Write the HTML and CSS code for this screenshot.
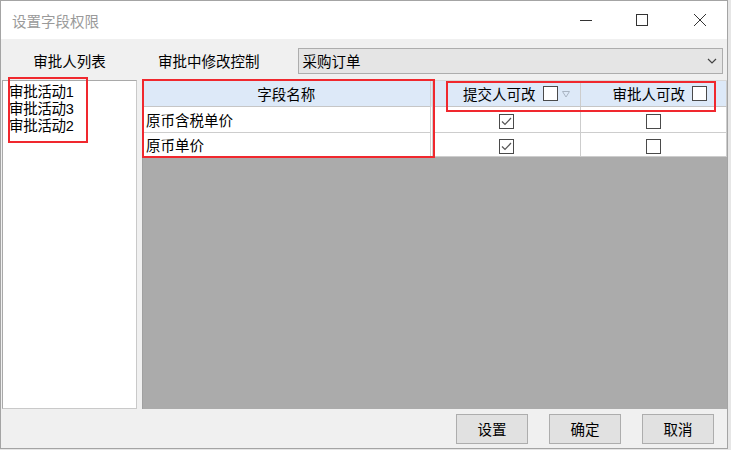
FILE: index.html
```html
<!DOCTYPE html>
<html lang="zh-CN">
<head>
    <meta charset="UTF-8">
    <title>设置字段权限</title>
    <link rel="stylesheet" href="styles.css">
</head>
<body>
    <div class="window">
        <div class="titlebar">
            <span class="title">设置字段权限</span>
            <div class="controls">
                <svg class="ctl ctl-min" width="14" height="14" viewBox="0 0 14 14"><line x1="1" y1="7.5" x2="13" y2="7.5" stroke="#333" stroke-width="1"/></svg>
                <svg class="ctl ctl-max" width="14" height="14" viewBox="0 0 14 14"><rect x="1.5" y="1.5" width="11" height="11" fill="none" stroke="#333" stroke-width="1"/></svg>
                <svg class="ctl ctl-close" width="14" height="14" viewBox="0 0 14 14"><path d="M1 1 L13 13 M13 1 L1 13" stroke="#333" stroke-width="1"/></svg>
            </div>
        </div>

        <div class="client">
            <div class="toolbar">
                <span class="label list-label">审批人列表</span>
                <span class="label ctrl-label">审批中修改控制</span>
                <div class="select">
                    <span>采购订单</span>
                    <svg width="10" height="6" viewBox="0 0 10 6"><polyline points="1,1 5,5 9,1" fill="none" stroke="#444" stroke-width="1.2"/></svg>
                </div>
            </div>

            <div class="main">
                <div class="approver-list">
                    <div class="item">审批活动1</div>
                    <div class="item">审批活动3</div>
                    <div class="item">审批活动2</div>
                </div>
                <div class="grid">
                    <table class="fields">
                        <colgroup>
                            <col class="c-name">
                            <col class="c-submit">
                            <col class="c-approve">
                        </colgroup>
                        <thead>
                            <tr>
                                <th class="name-head">字段名称</th>
                                <th>
                                    <div class="head-cell head-submit">
                                        <span>提交人可改</span>
                                        <span class="box"></span>
                                        <svg class="filter" width="8" height="8" viewBox="0 0 8 8"><polygon points="0.5,1.5 7.5,1.5 4,7" fill="none" stroke="#a9b4c2" stroke-width="1"/></svg>
                                    </div>
                                </th>
                                <th>
                                    <div class="head-cell head-approve">
                                        <span>审批人可改</span>
                                        <span class="box"></span>
                                    </div>
                                </th>
                            </tr>
                        </thead>
                        <tbody>
                            <tr>
                                <td class="name">原币含税单价</td>
                                <td class="check"><span class="box"><svg width="13" height="13" viewBox="0 0 13 13"><polyline points="2,6.5 5,9.5 11,3" fill="none" stroke="#555" stroke-width="1.2"/></svg></span></td>
                                <td class="check"><span class="box"></span></td>
                            </tr>
                            <tr class="last">
                                <td class="name">原币单价</td>
                                <td class="check"><span class="box"><svg width="13" height="13" viewBox="0 0 13 13"><polyline points="2,6.5 5,9.5 11,3" fill="none" stroke="#555" stroke-width="1.2"/></svg></span></td>
                                <td class="check"><span class="box"></span></td>
                            </tr>
                        </tbody>
                    </table>
                </div>
            </div>

            <div class="buttons">
                <button>设置</button>
                <button>确定</button>
                <button>取消</button>
            </div>
        </div>

        <!-- 红框标注 -->
        <div class="mark mark-list"></div>
        <div class="mark mark-name"></div>
        <div class="mark mark-head"></div>
    </div>
</body>
</html>
```

FILE: styles.css
```css
body {
    margin: 0;
    background-color: #e6e6e6;
    font-family: "Noto Sans CJK SC", "Liberation Sans", sans-serif;
    font-size: 14.5px;
    color: #000;
}
.window {
    position: relative;
    width: 728px;
    height: 449px;
    box-sizing: border-box;
    border: 1px solid #a4a4a4;
    background-color: #f0f0f0;
    display: flex;
    flex-direction: column;
}
.titlebar {
    height: 38px;
    background-color: #fff;
    display: flex;
    align-items: center;
    flex-shrink: 0;
}
.title {
    margin-left: 11px;
    color: #9a9a9a;
    line-height: 18px;
    margin-top: 2px;
}
.controls {
    margin-left: auto;
    display: flex;
    align-items: center;
    margin-right: 20px;
}
.ctl {
    display: block;
}
.ctl-min {
    margin-right: 42px;
}
.ctl-max {
    margin-right: 44px;
}

.client {
    flex: 1;
    display: flex;
    flex-direction: column;
}
.toolbar {
    height: 41px;
    display: flex;
    align-items: center;
    flex-shrink: 0;
}
.label {
    line-height: 18px;
    margin-top: 2px;
}
.list-label {
    width: 135px;
    margin-left: 1px;
    text-align: center;
}
.ctrl-label {
    margin-left: 21px;
}
.select {
    margin-left: 38px;
    width: 425px;
    height: 26px;
    box-sizing: border-box;
    margin-top: 2px;
    background-color: #e5e5e5;
    border: 1px solid #adadad;
    display: flex;
    align-items: center;
    padding: 0 5px 0 4px;
    line-height: 18px;
}
.select svg {
    margin-left: auto;
}

.main {
    height: 329px;
    display: flex;
    flex-shrink: 0;
}
.approver-list {
    width: 135px;
    margin-left: 1px;
    box-sizing: border-box;
    border: 1px solid #a9a9a9;
    border-right-color: #c9c9c9;
    border-bottom-color: #c9c9c9;
    background-color: #fff;
    padding: 3px 0 0 6px;
    /* 列表行距很紧，用拉丁字体作主字体以压低行框 */
    font-family: "Liberation Sans", "Noto Sans CJK SC", sans-serif;
}
.approver-list .item {
    line-height: 17px;
    height: 17px;
    letter-spacing: -0.3px;
}
.grid {
    margin-left: 5px;
    flex: 1;
    background-color: #ababab;
    border-left: 1px solid #a0a0a0;
    border-top: 1px solid #d8d8d8;
}
.fields {
    border-collapse: collapse;
    width: 584px;
    table-layout: fixed;
}
.c-name { width: 288px; }
.c-submit { width: 149px; }
.fields th, .fields td {
    border: 1px solid #cdcdcd;
    padding: 0;
    font-weight: normal;
    line-height: 18px;
}
.fields th {
    height: 25px;
    background-color: #dde9f8;
    border-bottom-color: #c6c6c6;
    border-top: none;
}
.fields td {
    height: 25px;
    background-color: #fff;
}
.fields tr.last td {
    height: 23px;
}
.fields th:first-child, .fields td:first-child {
    border-left: none;
}
.fields th.name-head {
    text-align: center;
    border-right: 3px double #d0d0d0;
}
.fields td.name {
    padding-left: 3px;
    border-right: 3px double #d0d0d0;
}
.head-cell {
    display: flex;
    align-items: center;
    justify-content: flex-end;
}
.head-submit {
    padding-right: 10px;
}
.head-approve {
    padding-right: 19px;
}
.head-cell .box {
    margin-left: 7px;
}
.filter {
    display: block;
    margin-left: 4px;
}
.box {
    display: inline-block;
    width: 15px;
    height: 15px;
    box-sizing: border-box;
    border: 1px solid #4a4a4a;
    background-color: #fff;
    vertical-align: middle;
    position: relative;
}
.box svg {
    position: absolute;
    left: 0;
    top: 0;
}
.fields td.check {
    text-align: center;
}
.fields td.check .box {
    margin-top: 1px;
}

.buttons {
    flex: 1;
    display: flex;
    justify-content: flex-end;
    align-items: flex-start;
    gap: 21px;
    padding: 5px 13px 0 0;
}
button {
    width: 72px;
    height: 30px;
    box-sizing: border-box;
    background-color: #e1e1e1;
    border: 1px solid #adadad;
    font-family: "Noto Sans CJK SC", "Liberation Sans", sans-serif;
    font-size: 14.5px;
    color: #000;
    padding: 0;
    line-height: 18px;
}

.mark {
    position: absolute;
    border: 2px solid #f0282e;
    box-sizing: border-box;
    pointer-events: none;
}
.mark-list {
    left: 7px;
    top: 76px;
    width: 80px;
    height: 66px;
}
.mark-name {
    left: 141px;
    top: 78px;
    width: 293px;
    height: 79px;
}
.mark-head {
    left: 445px;
    top: 80px;
    width: 270px;
    height: 31px;
}
```
